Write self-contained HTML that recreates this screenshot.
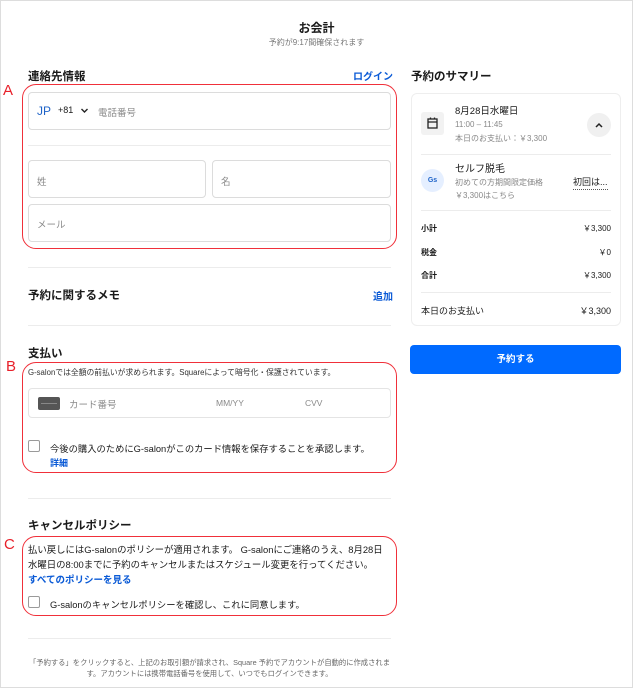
<!DOCTYPE html>
<html><head><meta charset="utf-8"><style>
*{box-sizing:border-box;margin:0;padding:0}
body{width:633px;height:688px;position:relative;background:#fff;font-family:"Liberation Sans","Noto Sans CJK JP",sans-serif;color:#1a1a1a;overflow:hidden}
.frame{position:absolute;left:0;top:0;width:633px;height:688px;border:1px solid #ddd}
.a{position:absolute;white-space:nowrap}
.h{font-weight:bold;font-size:11.5px}
.in{position:absolute;border:1px solid #dcdcdc;border-radius:4px}
.ph{color:#8a8a8a;font-size:9.5px}
.hr{position:absolute;height:1px;background:#ececec}
.red{position:absolute;border:1.3px solid #f0303a;border-radius:14px}
.lbl{position:absolute;color:#e8202a;font-size:15px}
.blue{color:#0a5ad6;font-weight:bold}
.cb{position:absolute;width:12px;height:12px;border:1px solid #9a9a9a;border-radius:2px}
</style></head><body>
<div class="frame"></div>
<div class="a" style="left:0;width:633px;text-align:center;top:19px;font-weight:bold;font-size:12px">お会計</div>
<div class="a" style="left:0;width:633px;text-align:center;top:37px;font-size:8px;color:#777">予約が9:17間確保されます</div>

<div class="a h" style="left:28px;top:68px">連絡先情報</div>
<div class="a blue" style="left:353px;top:68px;font-size:10px">ログイン</div>
<div class="lbl" style="left:3px;top:82px">A</div>
<div class="red" style="left:22px;top:84px;width:375px;height:165px"></div>
<div class="in" style="left:28px;top:92px;width:363px;height:38px"></div>
<div class="a" style="left:37px;top:104px;color:#1e63c8;font-size:12px">JP</div>
<div class="a" style="left:58px;top:105px;font-size:9px">+81</div>
<svg class="a" style="left:80px;top:107px" width="9" height="7"><path d="M1.5 2L4.5 5L7.5 2" fill="none" stroke="#222" stroke-width="1.4"/></svg>
<div class="a ph" style="left:98px;top:105px">電話番号</div>
<div class="hr" style="left:28px;top:145px;width:363px"></div>
<div class="in" style="left:28px;top:160px;width:178px;height:38px"></div>
<div class="a ph" style="left:37px;top:174px">姓</div>
<div class="in" style="left:212px;top:160px;width:179px;height:38px"></div>
<div class="a ph" style="left:221px;top:174px">名</div>
<div class="in" style="left:28px;top:204px;width:363px;height:38px"></div>
<div class="a ph" style="left:37px;top:217px">メール</div>
<div class="hr" style="left:28px;top:267px;width:363px"></div>
<div class="a h" style="left:28px;top:287px">予約に関するメモ</div>
<div class="a blue" style="left:373px;top:288px;font-size:10px">追加</div>
<div class="hr" style="left:28px;top:325px;width:363px"></div>

<div class="a h" style="left:28px;top:345px">支払い</div>
<div class="lbl" style="left:6px;top:358px">B</div>
<div class="red" style="left:22px;top:362px;width:375px;height:111px"></div>
<div class="a" style="left:28px;top:367px;font-size:7.8px;color:#333">G-salonでは全額の前払いが求められます。Squareによって暗号化・保護されています。</div>
<div class="in" style="left:28px;top:388px;width:363px;height:30px;border-color:#e4e4e4"></div>
<div class="a" style="left:38px;top:397px;width:22px;height:13px;background:#555;border-radius:2px"></div>
<div class="a" style="left:41px;top:403px;width:16px;height:1px;background:#888"></div>
<div class="a ph" style="left:69px;top:397px">カード番号</div>
<div class="a ph" style="left:216px;top:398px;font-size:8.5px">MM/YY</div>
<div class="a ph" style="left:305px;top:398px;font-size:8.5px">CVV</div>
<div class="cb" style="left:28px;top:440px"></div>
<div class="a" style="left:50px;top:441px;font-size:9.3px">今後の購入のためにG-salonがこのカード情報を保存することを承認します。</div>
<div class="a blue" style="left:50px;top:456px;font-size:9px">詳細</div>
<div class="hr" style="left:28px;top:498px;width:363px"></div>

<div class="a h" style="left:28px;top:517px">キャンセルポリシー</div>
<div class="lbl" style="left:4px;top:536px">C</div>
<div class="red" style="left:22px;top:536px;width:375px;height:80px"></div>
<div class="a" style="left:28px;top:543px;font-size:9.4px;line-height:14.5px">払い戻しにはG-salonのポリシーが適用されます。 G-salonにご連絡のうえ、8月28日<br>水曜日の8:00までに予約のキャンセルまたはスケジュール変更を行ってください。</div>
<div class="a blue" style="left:28px;top:572px;font-size:9.5px">すべてのポリシーを見る</div>
<div class="cb" style="left:28px;top:596px"></div>
<div class="a" style="left:50px;top:597px;font-size:9.3px">G-salonのキャンセルポリシーを確認し、これに同意します。</div>
<div class="hr" style="left:28px;top:638px;width:363px"></div>
<div class="a" style="left:28px;width:363px;text-align:center;top:657px;font-size:7.3px;color:#666;line-height:11px">「予約する」をクリックすると、上記のお取引額が請求され、Square 予約でアカウントが自動的に作成されま<br>す。アカウントには携帯電話番号を使用して、いつでもログインできます。</div>

<div class="a h" style="left:411px;top:68px">予約のサマリー</div>
<div class="a" style="left:411px;top:93px;width:210px;height:233px;border:1px solid #eee;border-radius:6px"></div>
<div class="a" style="left:421px;top:112px;width:23px;height:23px;background:#f2f2f2;border-radius:3px"></div>
<svg class="a" style="left:426px;top:116px" width="13" height="14" viewBox="0 0 13 14"><rect x="2" y="3" width="9" height="9" fill="none" stroke="#222" stroke-width="1.3"/><path d="M2 6H11M4.5 1.5V3.5M8.5 1.5V3.5" stroke="#222" stroke-width="1.3"/></svg>
<div class="a" style="left:455px;top:103px;font-size:9.5px">8月28日水曜日</div>
<div class="a" style="left:455px;top:120px;font-size:8px;color:#888">11:00 – 11:45</div>
<div class="a" style="left:455px;top:133px;font-size:8px;color:#888">本日のお支払い：￥3,300</div>
<div class="a" style="left:587px;top:113px;width:24px;height:24px;background:#f0f0f0;border-radius:50%"></div>
<svg class="a" style="left:594px;top:120px" width="10" height="10"><path d="M2 7L5 4L8 7" fill="none" stroke="#222" stroke-width="1.5"/></svg>
<div class="hr" style="left:421px;top:154px;width:190px"></div>
<div class="a" style="left:421px;top:169px;width:23px;height:23px;background:#e5efff;border-radius:50%;color:#1e63c8;font-size:7px;font-weight:bold;text-align:center;line-height:23px">Gs</div>
<div class="a" style="left:455px;top:160px;font-size:10px">セルフ脱毛</div>
<div class="a" style="left:455px;top:177px;font-size:8px;color:#888">初めての方期間限定価格</div>
<div class="a" style="left:455px;top:190px;font-size:8px;color:#888">￥3,300はこちら</div>
<div class="a" style="left:573px;top:175px;font-size:9px;border-bottom:1px dotted #555;padding-bottom:1px">初回は...</div>
<div class="hr" style="left:421px;top:210px;width:190px"></div>
<div class="a" style="left:421px;top:223px;font-size:8px;font-weight:bold">小計</div><div class="a" style="right:22px;top:223px;font-size:8px">￥3,300</div>
<div class="a" style="left:421px;top:247px;font-size:8px;font-weight:bold">税金</div><div class="a" style="right:22px;top:247px;font-size:8px">￥0</div>
<div class="a" style="left:421px;top:270px;font-size:8px;font-weight:bold">合計</div><div class="a" style="right:22px;top:270px;font-size:8px">￥3,300</div>
<div class="hr" style="left:421px;top:292px;width:190px"></div>
<div class="a" style="left:421px;top:304px;font-size:9px">本日のお支払い</div><div class="a" style="right:22px;top:304px;font-size:9px">￥3,300</div>
<div class="a" style="left:410px;top:345px;width:211px;height:29px;background:#006aff;border-radius:4px;color:#fff;font-weight:bold;font-size:9.5px;text-align:center;line-height:29px">予約する</div>
</body></html>
